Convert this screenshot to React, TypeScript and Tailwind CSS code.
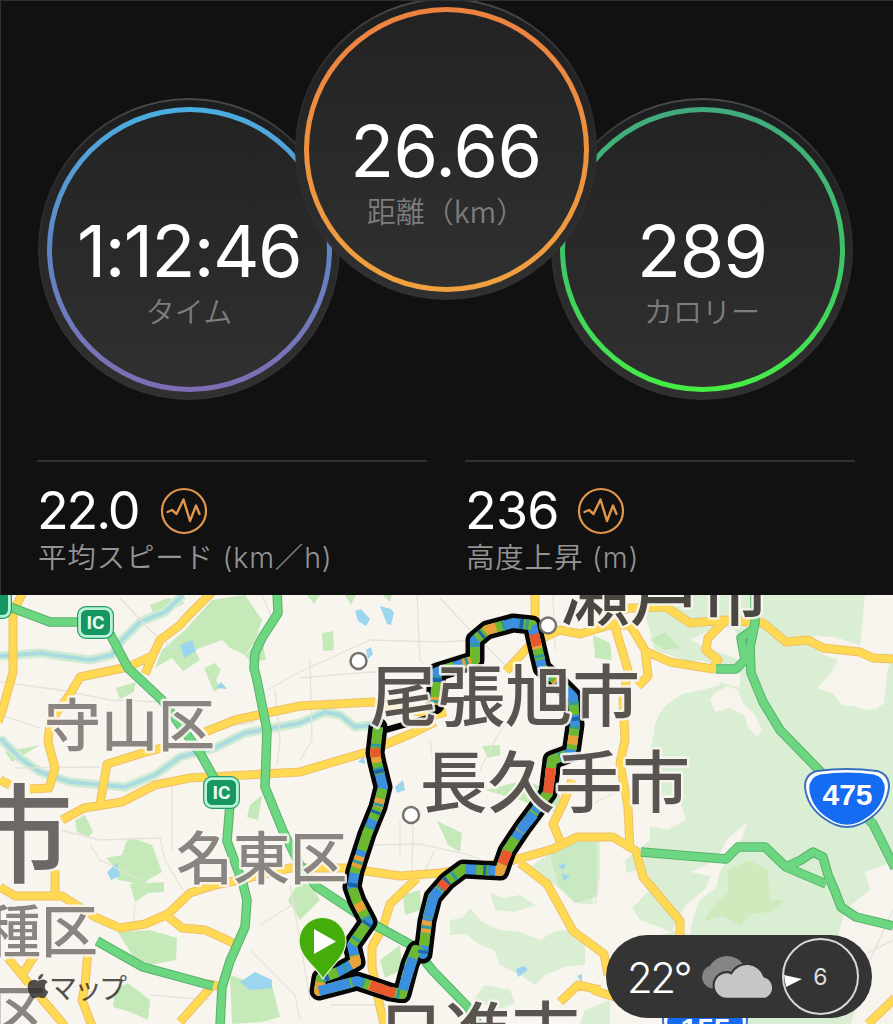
import { FaApple } from 'react-icons/fa'

const numberFont = "font-['Inter','Liberation_Sans',sans-serif]"
const labelFont = "font-['Noto_Sans_CJK_JP',sans-serif]"

interface DialProps {
  value: string
  label: string
  ring: string
  className: string
  valueClass: string
}

function Dial({ value, label, ring, className, valueClass }: DialProps) {
  return (
    <div className={`h-[302px] w-[302px] shrink-0 rounded-full bg-gradient-to-b from-[#4a4a4b] via-[#29292a] via-25% to-[#323233] p-[2px] ${className}`}>
      <div className="h-full w-full rounded-full bg-gradient-to-b from-[#1c1d1e] via-[#29292a] to-[#303031] p-[6.5px]">
        <div className={`h-full w-full rounded-full bg-gradient-to-b p-[5px] ${ring}`}>
          <div className="flex h-full w-full flex-col items-center rounded-full bg-gradient-to-b from-[#232323] to-[#303031] pt-[103px]">
            <div className={`whitespace-nowrap text-[72px] leading-[72px] text-white ${numberFont} ${valueClass}`}>{value}</div>
            <div className={`mt-[9px] whitespace-nowrap text-[29px] font-[350] leading-[28px] text-[#7d7d7d] ${labelFont}`}>{label}</div>
          </div>
        </div>
      </div>
    </div>
  )
}

function PulseIcon() {
  return (
    <svg width="48" height="48" viewBox="0 0 48 48" fill="none" stroke="#e2964c" strokeLinejoin="round" strokeLinecap="round">
      <circle cx="24" cy="24" r="22" strokeWidth="2.2" />
      <path d="M7.500 25 L12 23 L16.500 27 L23.500 12.500 L30 34 L36 18.500 L39.500 27" strokeWidth="2.4" />
    </svg>
  )
}

function Stat({ value, label, valueClass }: { value: string; label: string; valueClass: string }) {
  return (
    <div className="w-[390px] border-t-2 border-[#303030] pt-[24px]">
      <div className="flex h-[50px] items-center">
        <span className={`text-[52px] leading-[50px] text-white ${numberFont} ${valueClass}`}>{value}</span>
        <PulseIcon />
      </div>
      <div className="mt-[7px] whitespace-nowrap pl-px font-['Inter','Noto_Sans_CJK_JP',sans-serif] text-[28.5px] font-[350] leading-[30px] tracking-[0.8px] text-[#949494]">{label}</div>
    </div>
  )
}

const rivers = [
  'M0 656 L40 653 L90 660 L112 655 L122 640 L140 622 L165 612 L183 595',
  'M0 738 L20 758 L40 772 L70 782 L125 787 L155 775 L180 757 L215 748 L245 733 L300 723 L325 712 L340 715 L355 727 L372 725',
]

const minorRoads = [
  'M0 682 L60 690 L110 700 L160 702',
  'M0 715 L40 728 M15 768 L100 767 M175 735 L255 722',
  'M120 598 L150 630 L175 650 M262 595 L273 620',
  'M267 690 L300 672 L370 640 L440 642 L475 640',
  'M300 678 L370 672 L465 675 M417 595 L420 660 L425 665',
  'M440 598 L470 630 L540 700 M310 660 L312 740 L300 760',
  'M430 740 L434 770 M400 820 L400 855 M413 820 L412 875',
  'M370 845 L420 844 L470 855 L500 870 M435 850 L420 880',
  'M520 700 L495 740 L480 770 M275 690 L280 740 L277 765',
  'M60 830 L100 840 L160 838 L165 860 L183 890 M90 845 L100 860 L140 880',
  'M135 905 L133 925 M250 950 L295 995 L300 1020 M260 925 L300 900',
  'M290 885 L300 940 L310 1000 M150 995 L210 1000',
  'M385 980 L387 1000 M330 1005 L400 1005 M172 780 L172 850',
  'M850 1024 L855 960 L893 940 M740 930 L760 960 M870 960 L893 910',
  'M600 870 L595 905 M553 595 L555 650 M620 790 L580 810',
]

const yellowRoads = [
  'M24 590 L13 612 L13 672 L3 708 L-2 722',
  'M214 590 L188 616 L180 625 L160 640 L153 655 L145 674',
  'M152 656 L128 667 L80 677 L70 694 L50 722 L48 742 L55 768 L49 788 L30 789',
  'M205 732 L235 720 L262 714 L300 706 L372 702 L435 715 L446 712',
  'M165 747 L143 753 L107 764 L100 804',
  'M62 820 L84 808 L122 802 L155 785 L190 778 L300 772 L340 760 L367 752 L413 733 L435 722',
  'M0 780 L10 785',
  'M0 887 L15 896 L62 896 L95 917 L120 928 L145 924 L168 914 L190 893 L215 885 L240 880 L290 868 L345 868 L400 876 L440 873 L507 862 L553 849 L577 837 L613 837 L636 851 L643 877 L680 921 L680 940',
  'M55 870 L55 896',
  'M166 915 L182 928 L205 930 L225 939 L235 944',
  'M213 985 L180 1022 M218 986 L208 984',
  'M88 950 L85 985 L82 1000 L92 1026',
  'M8 958 L30 985 L65 1026 M35 955 L20 978',
  'M417 878 L390 904 L383 927 L372 947 L372 967 L380 1007 L384 1024',
  'M520 863 L547 884 L573 931 L604 954 L608 975 M593 990 L615 997',
  'M560 1002 L578 985 L600 990',
  'M535 590 L535 630',
  'M506 671 L530 645 L547 636 L560 630 L580 634 L613 624',
  'M613 620 L628 670 L623 700 L625 740 L620 763 L628 807 L630 850',
  'M595 625 L630 625 L645 650 L648 676 L638 686',
  'M645 651 L670 662 L713 669 L718 660 L706 650 L708 638 L726 620',
  'M600 618 L630 608 L666 607 L690 623 L726 620 L763 623 L786 642 L808 640 L823 648 L860 652 L873 658 L893 659',
  'M572 780 L563 804 L553 824 L560 841',
  'M895 998 L868 1024',
]

const greenRoads = [
  'M10 607 L50 622 L90 622',
  'M110 634 L128 668 L162 700 L200 753 L213 776 L230 804 L227 841 L243 884 L247 900 L245 927 L230 961 L222 987 L220 1026',
  'M277 590 L278 613 L262 638 L255 653 L254 668 L257 680 L267 730 L265 787 L283 831 L300 865 L317 887 L373 924 L413 946 L433 971 L467 1006 L480 1026',
  'M97 941 L143 967 L213 986',
  'M755 590 L755 623 L750 647 L751 673 L763 702 L780 730 L816 767 L873 824 L895 868',
  'M716 669 L736 669 L745 660 L741 638 L753 630',
  'M641 852 L726 859 L738 847 L765 847 L786 867 L826 884',
  'M786 867 L801 860 L813 852 L823 857 L828 875 L835 891 L841 907 L856 917 L893 926',
]

const parks = [
  'M150 605 L168 598 L185 603 L155 618 Z',
  'M212 600 L245 595 L262 620 L255 642 L245 655 L230 648 L222 640 L195 650 L200 660 L183 671 L172 658 L155 668 L162 650 L185 630 Z',
  'M204 668 L215 663 L221 670 L216 680 L220 688 L214 692 Z',
  'M116 688 L136 682 L134 692 L120 699 Z',
  'M322 633 L333 631 L334 650 L323 651 Z',
  'M250 805 L262 795 L258 820 L247 817 Z',
  'M75 820 L85 815 L93 832 L88 837 L77 832 Z',
  'M106 858 L122 855 L126 842 L132 838 L152 845 L162 872 L148 880 L142 887 L130 882 L118 880 L115 868 Z',
  'M130 884 L164 882 L164 892 L148 893 L135 902 Z',
  'M118 932 L150 930 L177 938 L176 960 L150 965 L132 955 Z',
  'M115 990 L128 983 L150 1000 L148 1020 L130 1012 L113 1007 Z',
  'M230 975 L250 982 L272 985 L280 1017 L262 1022 L232 1024 Z',
  'M300 880 L312 887 L320 900 L300 920 L288 900 Z',
  'M403 895 L420 890 L421 910 L405 915 Z',
  'M380 960 L400 945 L402 970 L385 978 Z',
  'M482 746 L500 745 L500 755 L488 758 Z',
  'M437 821 L462 833 L460 852 L448 845 Z',
  'M485 790 L525 780 L560 795 L560 815 L520 800 Z',
  'M245 655 L262 640 L266 660 L250 662 Z',
  'M593 635 L610 643 L612 660 L595 658 Z',
  'M650 640 L665 632 L680 648 L665 650 Z',
  'M307 595 L320 595 L314 604 Z M345 595 L356 595 L351 605 Z M383 595 L392 595 L390 602 Z',
  'M40 745 L5 752 L12 762 Z',
]

const ponds = [
  'M180 645 L192 640 L196 651 L184 658 Z',
  'M216 688 L221 682 L227 689 Z',
  'M355 611 L361 609 L370 619 L366 626 L358 621 Z',
  'M380 606 L391 609 L394 613 L391 625 L387 624 Z',
  'M366 650 L371 647 L373 654 L368 659 Z',
  'M395 787 L403 780 L405 790 L397 793 Z',
  'M107 872 L117 863 L120 876 L111 880 Z',
  'M240 982 L255 972 L272 980 L272 988 L250 990 Z',
  'M358 762 L364 756 L365 764 Z',
  'M516 969 L524 966 L528 970 L518 977 Z',
  'M577 976 L582 974 L582 982 Z M558 866 L566 863 L563 870 Z M562 874 L570 876 L564 881 Z',
]

// green hills on the east side, cut up by the light town areas below
const hills = [
  'M640 595 L893 595 L893 1024 L720 1024 L690 960 L660 935 L680 930 L650 890 L650 760 L650 740 L655 720 L665 706 L682 694 L702 690 L720 685 L714 670 L655 650 Z',
  'M625 860 L700 800 L720 900 L680 935 L640 920 L630 905 Z',
  'M450 920 L462 918 L470 908 L482 922 L500 930 L520 932 L540 940 L555 931 L570 930 L576 940 L585 945 L585 965 L568 966 L545 975 L535 985 L520 975 L500 965 L494 950 L480 945 L466 934 L450 935 Z',
  'M490 893 L504 898 L520 895 L535 905 L515 912 L495 910 Z',
  'M473 1000 L485 985 L510 990 L515 1003 L500 1010 Z',
  'M525 870 L570 840 L600 840 L600 905 L575 903 L555 885 Z',
  'M585 1010 L610 1000 L610 1024 L580 1024 Z',
]

const towns = [
  'M865 595 L893 595 L893 660 L888 668 L884 703 L876 709 L865 710 L853 706 L842 705 L832 693 L817 688 L830 674 L838 660 L824 655 L808 645 L815 636 L835 637 L860 645 Z',
  'M612 680 L655 672 L700 660 L740 672 L740 688 L720 682 L700 680 L680 692 L662 706 L655 725 L652 745 L645 745 L620 735 Z',
  'M655 795 L680 800 L686 820 L668 830 L648 826 Z',
  'M710 700 L716 692 L728 686 L738 690 L742 702 L755 715 L762 730 L757 737 L748 728 L745 716 L730 708 L715 712 Z',
  'M593 880 L640 870 L652 888 L640 900 L620 920 L640 940 L593 960 Z',
  'M672 930 L686 905 L706 888 L710 876 L690 872 L716 860 L728 838 L748 822 L742 838 L728 858 L720 872 L716 888 L700 900 L694 915 L690 935 Z',
  'M865 872 L893 862 L893 1024 L850 1024 L872 975 L838 935 L845 910 L870 890 Z',
  'M690 640 L712 650 L740 660 L735 630 L720 625 Z',
]

const routeMain =
  'M378 727 L375 753 L377 763 L383 787 L378 807 L367 834 L355 871 L352 887 L357 901 L368 922 L352 945 L356 962 L338 972 L321 978 L319 991 L357 981 L390 992 L402 994 L410 964 L416 950 L423 954 L427 921 L433 897 L447 881 L463 869 L500 871 L507 851 L523 827 L532 815 L548 793 L552 760 L571 753 L575 725 L573 697 L560 684 L542 668 L532 625 L513 623 L487 630 L475 640 L475 660 L437 672 L435 705'

const routeStripes = [
  { color: '#6cb82e', dash: '24 11 13 15 32 9' },
  { color: '#e9a23a', dash: '0 24 12 37 9 28' },
  { color: '#2f9aa0', dash: '0 17 3 21 3 17' },
  { color: '#1f62ad', dash: '0 43 4 39 3 30' },
]

const hotSpots = [
  'M375 748 L376 757',
  'M370 985 L390 992 L395 993',
  'M441 888 L446 882',
  'M502 864 L508 851',
  'M548 793 L551 768',
  'M534 634 L537 646',
]

const blueRuns = ['M319 991 L350 983', 'M403 990 L413 958', 'M428 917 L434 896 L439 890', 'M520 831 L534 814']

function Roads({ paths, width, casing, fill }: { paths: string[]; width: number; casing: string; fill: string }) {
  const d = paths.join(' ')
  return (
    <g fill="none" strokeLinejoin="round">
      <path d={d} stroke={casing} strokeWidth={width + 2} />
      <path d={d} stroke={fill} strokeWidth={width} />
    </g>
  )
}

function IcBadge({ x, y }: { x: number; y: number }) {
  return (
    <g transform={`translate(${x} ${y})`}>
      <rect width="37" height="33" rx="9" fill="#219b70" />
      <rect x="1.200" y="1.200" width="34.600" height="30.600" rx="8" fill="#b9f3d5" />
      <rect x="4" y="4" width="29" height="25" rx="5.500" fill="#159663" />
      <text x="18.500" y="23" textAnchor="middle" fontSize="19" fontWeight="700" fill="#e9fff5" className="font-['Roboto',sans-serif]">IC</text>
    </g>
  )
}

function RouteShield({ x, y, label }: { x: number; y: number; label: string }) {
  const shape = 'M14 2 Q44 -2 74 2 Q86 5 86 18 Q84 38 66 50 Q44 66 22 50 Q4 38 2 18 Q2 5 14 2 Z'
  return (
    <g transform={`translate(${x} ${y})`}>
      <path d={shape} fill="#fff" stroke="#3b6fc0" strokeWidth="2" />
      <path d={shape} fill="#156bf2" transform="translate(4.400 3.600) scale(.9)" />
      <text x="44.500" y="36" textAnchor="middle" fontSize="30" fontWeight="700" fill="#fff" className="font-['Liberation_Sans',sans-serif]">{label}</text>
    </g>
  )
}

const places = [
  { name: '瀬戸市', x: 560, y: 620, size: 70, fill: '#4b4844' },
  { name: '尾張旭市', x: 370, y: 721, size: 67.5, fill: '#595450' },
  { name: '長久手市', x: 420, y: 807, size: 67.5, fill: '#595450' },
  { name: '守山区', x: 44, y: 746, size: 57, fill: '#8b8581' },
  { name: '名東区', x: 176, y: 879, size: 57, fill: '#8b8581' },
  { name: '市', x: -34, y: 874, size: 107, fill: '#6d6865' },
  { name: '種区', x: -16, y: 952, size: 57, fill: '#8b8581' },
  { name: '区', x: -10, y: 1033, size: 57, fill: '#8b8581' },
  { name: '日進市', x: 377, y: 1058, size: 67.5, fill: '#595450' },
]

function MapView() {
  return (
    <svg className="block" width="893" height="429" viewBox="0 595 893 429">
      <rect y="595" width="893" height="429" fill="#f8f5ef" />
      <path d={hills.join(' ')} fill="#daeed3" />
      <path d={towns.join(' ')} fill="#f7f3ed" />
      <path d="M728 870 L750 860 L768 870 L770 900 L785 900 L772 912 L752 914 L740 925 L722 916 L703 922 L716 902 L728 893 Z" fill="#cfebbe" />
      <path d="M550 855 L575 842 L597 842 L597 896 L575 903 L558 885 Z" fill="#c8e9c2" />
      <path d={parks.join(' ')} fill="#c6e9ba" />
      <g fill="none" strokeLinejoin="round">
        <path d={rivers.join(' ')} stroke="#cfebd2" strokeWidth="9" />
        <path d={rivers.join(' ')} stroke="#a9dbe0" strokeWidth="4" />
      </g>
      <path d={ponds.join(' ')} fill="#9bd5ee" />
      <path d={minorRoads.join(' ')} fill="none" stroke="#e6e2db" strokeWidth="1.300" />
      <Roads paths={yellowRoads} width={7} casing="#eec06a" fill="#ffd952" />
      <Roads paths={greenRoads} width={7.5} casing="#55b26c" fill="#6dd680" />

      <IcBadge x={77} y={606} />
      <IcBadge x={203} y={776} />
      <g transform="translate(-25 586)">
        <rect width="37" height="33" rx="9" fill="#219b70" />
        <rect x="1.200" y="1.200" width="34.600" height="30.600" rx="8" fill="#b9f3d5" />
        <rect x="4" y="4" width="29" height="25" rx="5.500" fill="#159663" />
      </g>
      <RouteShield x={803} y={769} label="475" />
      <RouteShield x={661} y={1003} label="155" />

      <g fill="none" strokeLinejoin="round">
        <path d={routeMain} stroke="#060606" strokeWidth="19" strokeLinecap="round" />
        <path d="M382 731 L435 716" stroke="#060606" strokeWidth="6" />
        <path d={routeMain} stroke="#3c8ede" strokeWidth="10" />
        {routeStripes.map((s) => (
          <path key={s.color} d={routeMain} stroke={s.color} strokeWidth="10" strokeDasharray={s.dash} />
        ))}
        <path d={blueRuns.join(' ')} stroke="#3c8ede" strokeWidth="10" />
        <path d={hotSpots.join(' ')} stroke="#e8582c" strokeWidth="10" />
      </g>

      <g fill="#fff" stroke="#77736f" strokeWidth="2.500">
        <circle cx="358.500" cy="661" r="8" />
        <circle cx="411" cy="815" r="8" />
        <circle cx="548" cy="625.500" r="8" />
      </g>

      <g className={labelFont} fontWeight="500" stroke="#f8f5ef" strokeOpacity="0.9" strokeWidth="5" strokeLinejoin="round" paintOrder="stroke">
        {places.map((p, i) => (
          <text key={i} x={p.x} y={p.y} fontSize={p.size} fill={p.fill}>{p.name}</text>
        ))}
      </g>

      <path d="M323 979 C316 967 299 957 299 941 A23.500 23.500 0 0 1 346 941 C346 957 330 967 323 979 Z" fill="#45ad09" stroke="#e9f5e0" strokeWidth="1.200" />
      <path d="M314 929 L336 941.500 L314 954 Z" fill="#fff" />

      <g opacity="0.82">
        <FaApple x={24} y={972} size={28} color="#2e2c2a" />
        <text x="49" y="999" fontSize="28" fill="#2e2c2a" textLength="78" className={labelFont}>マップ</text>
      </g>
    </svg>
  )
}

function WeatherPill() {
  return (
    <div className="absolute left-[606px] top-[935px] flex h-[83px] w-[266px] items-center rounded-full bg-[#343434] pl-[21px]">
      <span className={`w-[70px] pt-[2px] text-[42px] font-[350] leading-none tracking-[-2.5px] text-white ${numberFont}`}>22°</span>
      <svg width="78" height="46" viewBox="0 0 73 43">
        <path d="M13 32 A11 11 0 0 1 12 11 A19 19 0 0 1 43 9 L30 32 Z" fill="#858585" />
        <path d="M28 42 A12.500 12.500 0 0 1 28 17 Q31 17 32 18 A17 17 0 0 1 63 21 A11 11 0 0 1 64 42 Z" fill="#c6c6c6" stroke="#343434" strokeWidth="2" />
      </svg>
      <div className="relative ml-[7px] flex h-[77px] w-[77px] items-center justify-center rounded-full border-[2.5px] border-[#d8d8d8]">
        <svg className="absolute left-0 top-[34px]" width="18" height="14" viewBox="0 0 18 14">
          <path d="M0 1 L18 5 L2 13 Z" fill="#fff" />
        </svg>
        <span className={`pt-[2px] text-[23px] leading-none text-[#dedede] ${numberFont}`}>6</span>
      </div>
    </div>
  )
}

export default function App() {
  return (
    <main className="relative h-[1024px] w-[893px] overflow-hidden bg-[#111111]">
      <section className="h-[595px] overflow-hidden border-l border-t border-[#303030]">
        <div className="-mt-[3px] flex items-start pl-[37px]">
          <Dial value="1:12:46" label="タイム" ring="from-[#4aaee0] via-[#5d86c6] to-[#7e6db4]" className="mt-[100px]" valueClass="tracking-[-1.6px]" />
          <Dial value="26.66" label="距離（km）" ring="from-[#ec8140] to-[#f0a13e]" className="z-10 -ml-[45px]" valueClass="tracking-[-0.6px]" />
          <Dial value="289" label="カロリー" ring="from-[#42aa7e] via-[#3fc267] to-[#45ee43]" className="-ml-[46px] mt-[100px]" valueClass="tracking-[-1px]" />
        </div>
        <div className="mt-[60px] flex gap-[38px] pl-[36px]">
          <Stat value="22.0" label="平均スピード (km／h)" valueClass="mr-[21px] tracking-[-2.1px]" />
          <Stat value="236" label="高度上昇 (m)" valueClass="mr-[18px] tracking-[-0.8px]" />
        </div>
      </section>
      <MapView />
      <WeatherPill />
    </main>
  )
}
